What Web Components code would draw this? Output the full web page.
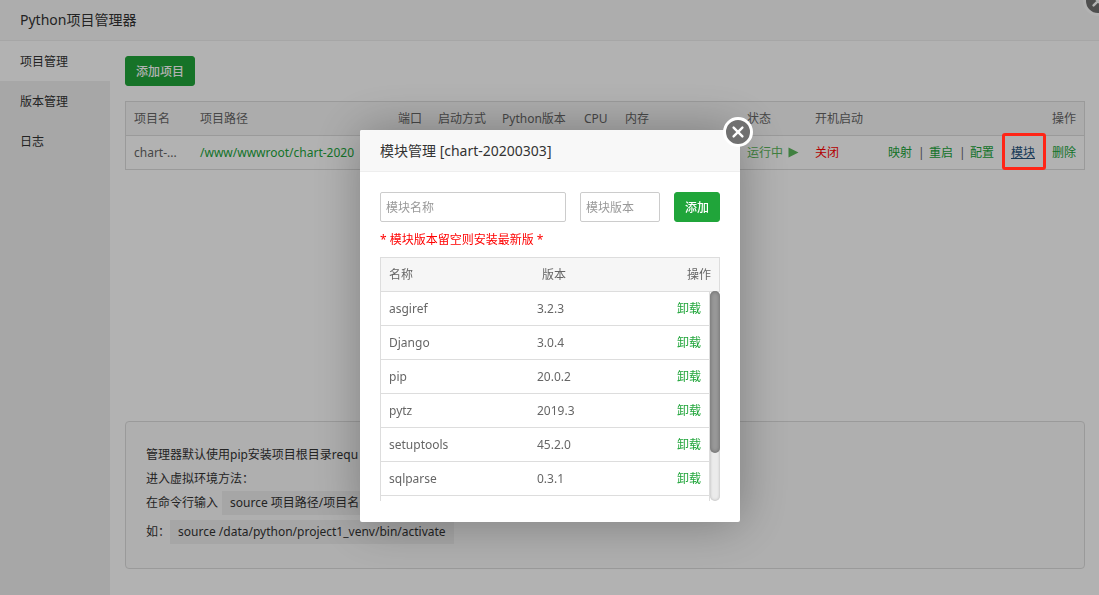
<!DOCTYPE html>
<html lang="zh-CN">
<head>
<meta charset="utf-8">
<title>Python项目管理器</title>
<style>
html,body{margin:0;min-height:100vh}
body{font:12px/20px "Noto Sans","Noto Sans CJK SC",sans-serif;color:#333;overflow:hidden;
--green:#20a53a;--line:#ddd;--muted:#666}
</style>
</head>
<body>
<py-manager></py-manager>
<py-modal heading="模块管理 [chart-20200303]"><module-panel></module-panel></py-modal>

<script>
function define(name, html, setup){
  const t=document.createElement('template');
  t.innerHTML=html;
  customElements.define(name,class extends HTMLElement{
    connectedCallback(){
      if(this.shadowRoot)return;
      this.attachShadow({mode:'open'}).append(t.content.cloneNode(true));
      if(setup)setup(this,this.shadowRoot);
    }
  });
}

define('close-button',`<style>
:host{display:block;width:30px;height:30px}
button{display:block;box-sizing:border-box;width:30px;height:30px;padding:0;border:3px solid #fff;border-radius:50%;background:#707070;cursor:pointer}
svg{display:block;width:24px;height:24px}
</style><button type="button" aria-label="关闭窗口"><svg viewBox="0 0 24 24" fill="none" stroke="#fff" stroke-width="2.4" stroke-linecap="round"><path d="M7.6 7.6l8.8 8.8M16.4 7.6l-8.8 8.8"/></svg></button>`);

define('green-button',`<style>
:host{display:block;flex:none}
button{display:block;height:30px;padding:2px 10px 0;border:1px solid var(--green);border-radius:3px;background:var(--green);color:#fff;font:inherit;font-weight:500;cursor:pointer}
</style><button type="button"><slot></slot></button>`);

define('side-nav',`<style>
:host{display:block;width:110px;flex:none;background:#f0f0f0}
a{display:block;padding:2px 20px 0;line-height:38px;color:#333;text-decoration:none}
a[aria-current]{background:#fff}
</style><nav><a href="#project" aria-current="page">项目管理</a><a href="#version">版本管理</a><a href="#log">日志</a></nav>`);

define('project-table',`<style>
:host{display:block;min-height:320px}
table{width:100%;table-layout:fixed;border-spacing:0;border:1px solid var(--line);border-bottom:0;color:var(--muted)}
th,td{box-sizing:border-box;height:34px;padding:0 8px;border-bottom:1px solid var(--line);text-align:left;font-weight:400;white-space:nowrap}
th{background:#f6f6f6}
th:last-child{text-align:right}
a{color:var(--green);text-decoration:none}
.off{color:red}
.state{display:flex;align-items:center;gap:5px;color:#5cb85c}
.state svg{width:11px;height:11px}
.ops{display:flex;justify-content:flex-end;gap:6px}
.ops i{width:5px;text-align:center;font-style:normal}
.mark{position:relative}
.mark a{color:#23527c;text-decoration:underline}
.mark b{position:absolute;inset:-10px -11px -7px -9px;border:3px solid #ff2516;border-radius:3px;z-index:30;pointer-events:none}
</style><table>
<colgroup><col style="width:66px"><col style="width:198px"><col style="width:40px"><col style="width:64px"><col style="width:82px"><col style="width:41px"><col style="width:122px"><col style="width:68px"><col style="width:66px"><col></colgroup>
<thead><tr><th>项目名</th><th>项目路径</th><th>端口</th><th>启动方式</th><th>Python版本</th><th>CPU</th><th>内存</th><th>状态</th><th>开机启动</th><th>操作</th></tr></thead>
<tbody><tr><td title="chart-20200303">chart-...</td><td><a href="#path">/www/wwwroot/chart-2020</a></td><td></td><td></td><td></td><td></td><td></td>
<td><a href="#state" class="state">运行中<svg viewBox="0 0 11 11"><path d="M0.5 0.5L10.5 5.5 0.5 10.5z" fill="#5cb85c"/></svg></a></td>
<td><a href="#boot" class="off">关闭</a></td>
<td><div class="ops"><a href="#map">映射</a><i>|</i><a href="#restart">重启</a><i>|</i><a href="#config">配置</a><i>|</i><span class="mark"><a href="#module">模块</a><b></b></span><i>|</i><a href="#delete">删除</a></div></td></tr></tbody>
</table>`);

define('help-box',`<style>
:host{display:block;box-sizing:border-box;padding:21px 20px;border:1px solid var(--line);border-radius:4px;background:#fbfbfb}
ul{list-style:none;margin:0;padding:0 0 3px;line-height:24px}
li{display:flex}
.cmd{gap:4px}
.eg{margin-top:5px}
code{font:inherit;padding:0 8px;background:#eee}
</style><ul><li>管理器默认使用pip安装项目根目录requ</li><li>进入虚拟环境方法：</li><li class="cmd">在命令行输入 <code>source 项目路径/项目名</code></li><li class="eg">如：<code>source /data/python/project1_venv/bin/activate</code></li></ul>`);

define('py-manager',`<style>
:host{display:flex;flex-direction:column;position:relative;min-height:100vh;background:#fff}
header{padding:0 20px;line-height:40px;font-size:14px;background:#f8f8f8;border-bottom:1px solid #eee}
.body{display:flex;flex:1}
main{flex:1;min-width:0;padding:15px 14px 24px 15px}
.tools{display:flex}
project-table{margin-top:15px}
close-button{position:absolute;top:-14px;right:-14px}
</style><header>Python项目管理器</header><div class="body"><side-nav></side-nav><main><div class="tools"><green-button>添加项目</green-button></div><project-table></project-table><help-box></help-box></main></div><close-button></close-button>`);

define('py-modal',`<style>
:host{position:fixed;inset:0;z-index:20;display:flex;justify-content:center;align-items:flex-start;box-sizing:border-box;padding:130px 0 0 1px;background:rgba(0,0,0,.3)}
section{position:relative;width:380px;background:#fff;border-radius:2px;box-shadow:1px 1px 50px rgba(0,0,0,.3)}
header{padding:0 20px;line-height:41px;font-size:14px;background:#f8f8f8;border-bottom:1px solid #eee;border-radius:2px 2px 0 0}
close-button{position:absolute;top:-13px;right:-13px}
</style><section role="dialog" aria-labelledby="t"><header id="t"></header><slot></slot><close-button></close-button></section>`,
(h,r)=>{r.querySelector('header').textContent=h.getAttribute('heading')});

define('module-panel',`<style>
:host{display:block;padding:20px 20px 21px}
form{display:flex;justify-content:space-between}
input{box-sizing:border-box;height:30px;padding:0 5px;border:1px solid #ccc;border-radius:2px;font:inherit;color:#333;min-width:0}
input::placeholder{color:#999}
.n{width:186px}.v{width:80px}
p{margin:8px 0 7px;color:red}
table{width:100%;table-layout:fixed;border-spacing:0;border:1px solid var(--line);border-bottom:0;color:var(--muted)}
th,td{box-sizing:border-box;height:34px;padding:0 8px;border-bottom:1px solid var(--line);text-align:left;font-weight:400}
th{background:#f6f6f6}
th:last-child,td:last-child{text-align:right}
.list{display:flex;height:209px}
.view{flex:1;overflow:hidden}
.view table{border-top:0}
.bar{width:10px;margin-top:-1px;border-radius:5px;background:#ebebeb;box-shadow:inset 0 0 3px rgba(0,0,0,.25)}
.thumb{height:162px;border-radius:5px;background:#999;box-shadow:inset 0 0 4px rgba(0,0,0,.35)}
a{color:var(--green);text-decoration:none}
</style><form><input class="n" aria-label="模块名称" placeholder="模块名称"><input class="v" aria-label="模块版本" placeholder="模块版本"><green-button>添加</green-button></form>
<p>* 模块版本留空则安装最新版 *</p>
<table><colgroup><col style="width:153px"><col><col></colgroup><thead><tr><th>名称</th><th>版本</th><th>操作</th></tr></thead></table>
<div class="list"><div class="view"><table><colgroup><col style="width:148px"><col><col></colgroup><tbody></tbody></table></div><div class="bar"><div class="thumb"></div></div></div>`,
(h,r)=>{
  const rows=[['asgiref','3.2.3'],['Django','3.0.4'],['pip','20.0.2'],['pytz','2019.3'],['setuptools','45.2.0'],['sqlparse','0.3.1']];
  r.querySelector('tbody').innerHTML=rows.map(([n,v])=>`<tr><td>${n}</td><td>${v}</td><td><a href="#remove">卸载</a></td></tr>`).join('')+'<tr><td></td><td></td><td></td></tr>';
});
</script>
</body>
</html>
